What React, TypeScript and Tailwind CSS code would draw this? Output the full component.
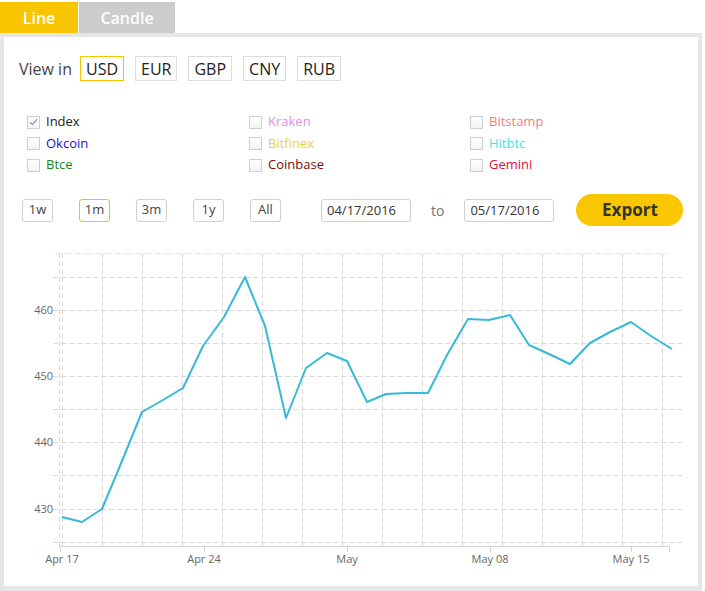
import { useState } from 'react'

const currencies = ['USD', 'EUR', 'GBP', 'CNY', 'RUB']

const exchanges = [
    { name: 'Index', color: 'text-[#222]', checked: true },
    { name: 'Kraken', color: 'text-[#e38de3]' },
    { name: 'Bitstamp', color: 'text-[#f08080]' },
    { name: 'Okcoin', color: 'text-[#1d0fd0]' },
    { name: 'Bitfinex', color: 'text-[#f3d02c]' },
    { name: 'Hitbtc', color: 'text-[#3fe3e3]' },
    { name: 'Btce', color: 'text-[#1d851d]' },
    { name: 'Coinbase', color: 'text-[#7d0a0a]' },
    { name: 'Gemini', color: 'text-[#d8123e]' },
]

const ranges = ['1w', '1m', '3m', '1y', 'All']

// y positions of the price line, one per day from Apr 17 to May 17
const points: [number, number][] = [
    [62, 517], [82, 522], [102, 509], [122, 461], [142, 412], [163, 400], [183, 388],
    [203, 346], [224, 317], [245, 277], [265, 326], [286, 418], [306, 368], [327, 353],
    [347, 361], [367, 402], [386, 394], [407, 393], [428, 393], [447, 355], [468, 319],
    [489, 320], [510, 315], [529, 345], [549, 354], [570, 364], [590, 343], [610, 332],
    [631, 322], [651, 336], [672, 349],
]

const hLines = [277, 310, 343, 376, 409, 442, 475, 509, 542]
const vLines = Array.from({ length: 16 }, (_, i) => 62 + i * 40)
const yLabels = [
    { v: '460', y: 310 },
    { v: '450', y: 376 },
    { v: '440', y: 442 },
    { v: '430', y: 509 },
]
const xLabels = [
    { t: 'Apr 17', x: 62 },
    { t: 'Apr 24', x: 204 },
    { t: 'May', x: 347 },
    { t: 'May 08', x: 490 },
    { t: 'May 15', x: 631 },
]

function Chart() {
    return (
        <svg width="692" height="336" viewBox="4 240 692 336" className="block">
            {/* grid */}
            <line x1="55" y1="253.5" x2="668" y2="253.5" stroke="#e4e4e4" strokeDasharray="6 4" />
            {hLines.map(y => (
                <line key={y} x1="53" y1={y + 0.5} x2="682" y2={y + 0.5} stroke="#d9d9d9" strokeDasharray="5 3" />
            ))}
            <line x1="59.5" y1="253" x2="59.5" y2="546" stroke="#d9d9d9" strokeDasharray="5 3" />
            {vLines.map(x => (
                <line key={x} x1={x + 0.5} y1="253" x2={x + 0.5} y2="546" stroke="#d9d9d9" strokeDasharray="5 3" />
            ))}

            {/* axis */}
            <line x1="59" y1="546.5" x2="669" y2="546.5" stroke="#d4d4d4" />
            {[60, 204, 347, 490, 631, 669].map(x => (
                <line key={x} x1={x + 0.5} y1="546" x2={x + 0.5} y2="552" stroke="#d4d4d4" />
            ))}

            {yLabels.map(l => (
                <text key={l.v} x="53" y={l.y + 4} textAnchor="end" fontSize="11" fill="#666" fontFamily="'Open Sans', sans-serif">
                    {l.v}
                </text>
            ))}
            {xLabels.map(l => (
                <text key={l.t} x={l.x} y="563" textAnchor="middle" fontSize="11" fill="#666" fontFamily="'Open Sans', sans-serif">
                    {l.t}
                </text>
            ))}

            <polyline
                points={points.map(p => p.join(',')).join(' ')}
                fill="none"
                stroke="#37b9d7"
                strokeWidth="2"
                strokeLinejoin="round"
            />
        </svg>
    )
}

export default function App() {
    const [currency, setCurrency] = useState('USD')
    const [range, setRange] = useState('1m')
    const [checked, setChecked] = useState<Record<string, boolean>>({ Index: true })

    return (
        <div className="w-[702px] font-['Open_Sans',sans-serif] text-[#333]">
            {/* Tabs */}
            <div className="flex pt-[2px] h-[33px]">
                <div className="w-[78px] bg-[#f9c400] text-white text-[16px] font-semibold flex items-center justify-center">
                    Line
                </div>
                <div className="w-[96px] ml-[1px] bg-[#cccccc] text-white text-[16px] font-semibold flex items-center justify-center">
                    Candle
                </div>
            </div>

            <div className="border-4 border-b-[5px] border-[#e6e6e6] h-[558px] overflow-hidden">
                {/* Currency */}
                <div className="flex items-center pl-[15px] pt-[19px]">
                    <span className="text-[16px] text-[#444] mr-[8px]">View in</span>
                    <div className="flex gap-[11px]">
                        {currencies.map(c => (
                            <button
                                key={c}
                                onClick={() => setCurrency(c)}
                                className={`h-[25px] px-[5px] border text-[16px] leading-none text-[#222] bg-white ${
                                    currency === c ? 'border-[#f5c400]' : 'border-[#dcdcdc]'
                                }`}
                            >
                                {c}
                            </button>
                        ))}
                    </div>
                </div>

                {/* Exchanges */}
                <div className="grid grid-cols-[222px_221px_200px] pl-[23px] pt-[34px] gap-y-[7.5px]">
                    {exchanges.map(e => (
                        <label key={e.name} className="flex items-center h-[14px] cursor-pointer">
                            <span
                                onClick={() => setChecked(s => ({ ...s, [e.name]: !s[e.name] }))}
                                className="w-[13px] h-[13px] border border-[#cfcfcf] bg-gradient-to-b from-white to-[#f3f3f3] flex items-center justify-center"
                            >
                                {checked[e.name] && (
                                    <svg width="9" height="8" viewBox="0 0 9 8">
                                        <path d="M1 4.2 L3.4 6.5 L8 1.2" fill="none" stroke="#555" strokeWidth="1" />
                                    </svg>
                                )}
                            </span>
                            <span className={`ml-[6px] text-[13px] ${e.color}`}>{e.name}</span>
                        </label>
                    ))}
                </div>

                {/* Range + dates */}
                <div className="flex items-center pl-[18px] pt-[22px]">
                    <div className="flex gap-[26px]">
                        {ranges.map(r => (
                            <button
                                key={r}
                                onClick={() => setRange(r)}
                                className={`w-[31px] h-[23px] rounded-[3px] border text-[13px] text-[#444] bg-white ${
                                    range === r ? 'border-[#f5c400]' : 'border-[#d0d0d0]'
                                }`}
                            >
                                {r}
                            </button>
                        ))}
                    </div>
                    <input
                        defaultValue="04/17/2016"
                        className="ml-[40px] w-[90px] h-[23px] rounded-[3px] border border-[#d0d0d0] px-[5px] text-[13px] text-[#333] outline-none"
                    />
                    <span className="ml-[20px] text-[14px] text-[#777]">to</span>
                    <input
                        defaultValue="05/17/2016"
                        className="ml-[20px] w-[90px] h-[23px] rounded-[3px] border border-[#d0d0d0] px-[5px] text-[13px] text-[#333] outline-none"
                    />
                    <button className="ml-[22px] w-[107px] h-[32px] rounded-full bg-[#f9c600] text-[17px] font-bold text-[#333]">
                        Export
                    </button>
                </div>

                <div className="mt-[14px]">
                    <Chart />
                </div>
            </div>
        </div>
    )
}
